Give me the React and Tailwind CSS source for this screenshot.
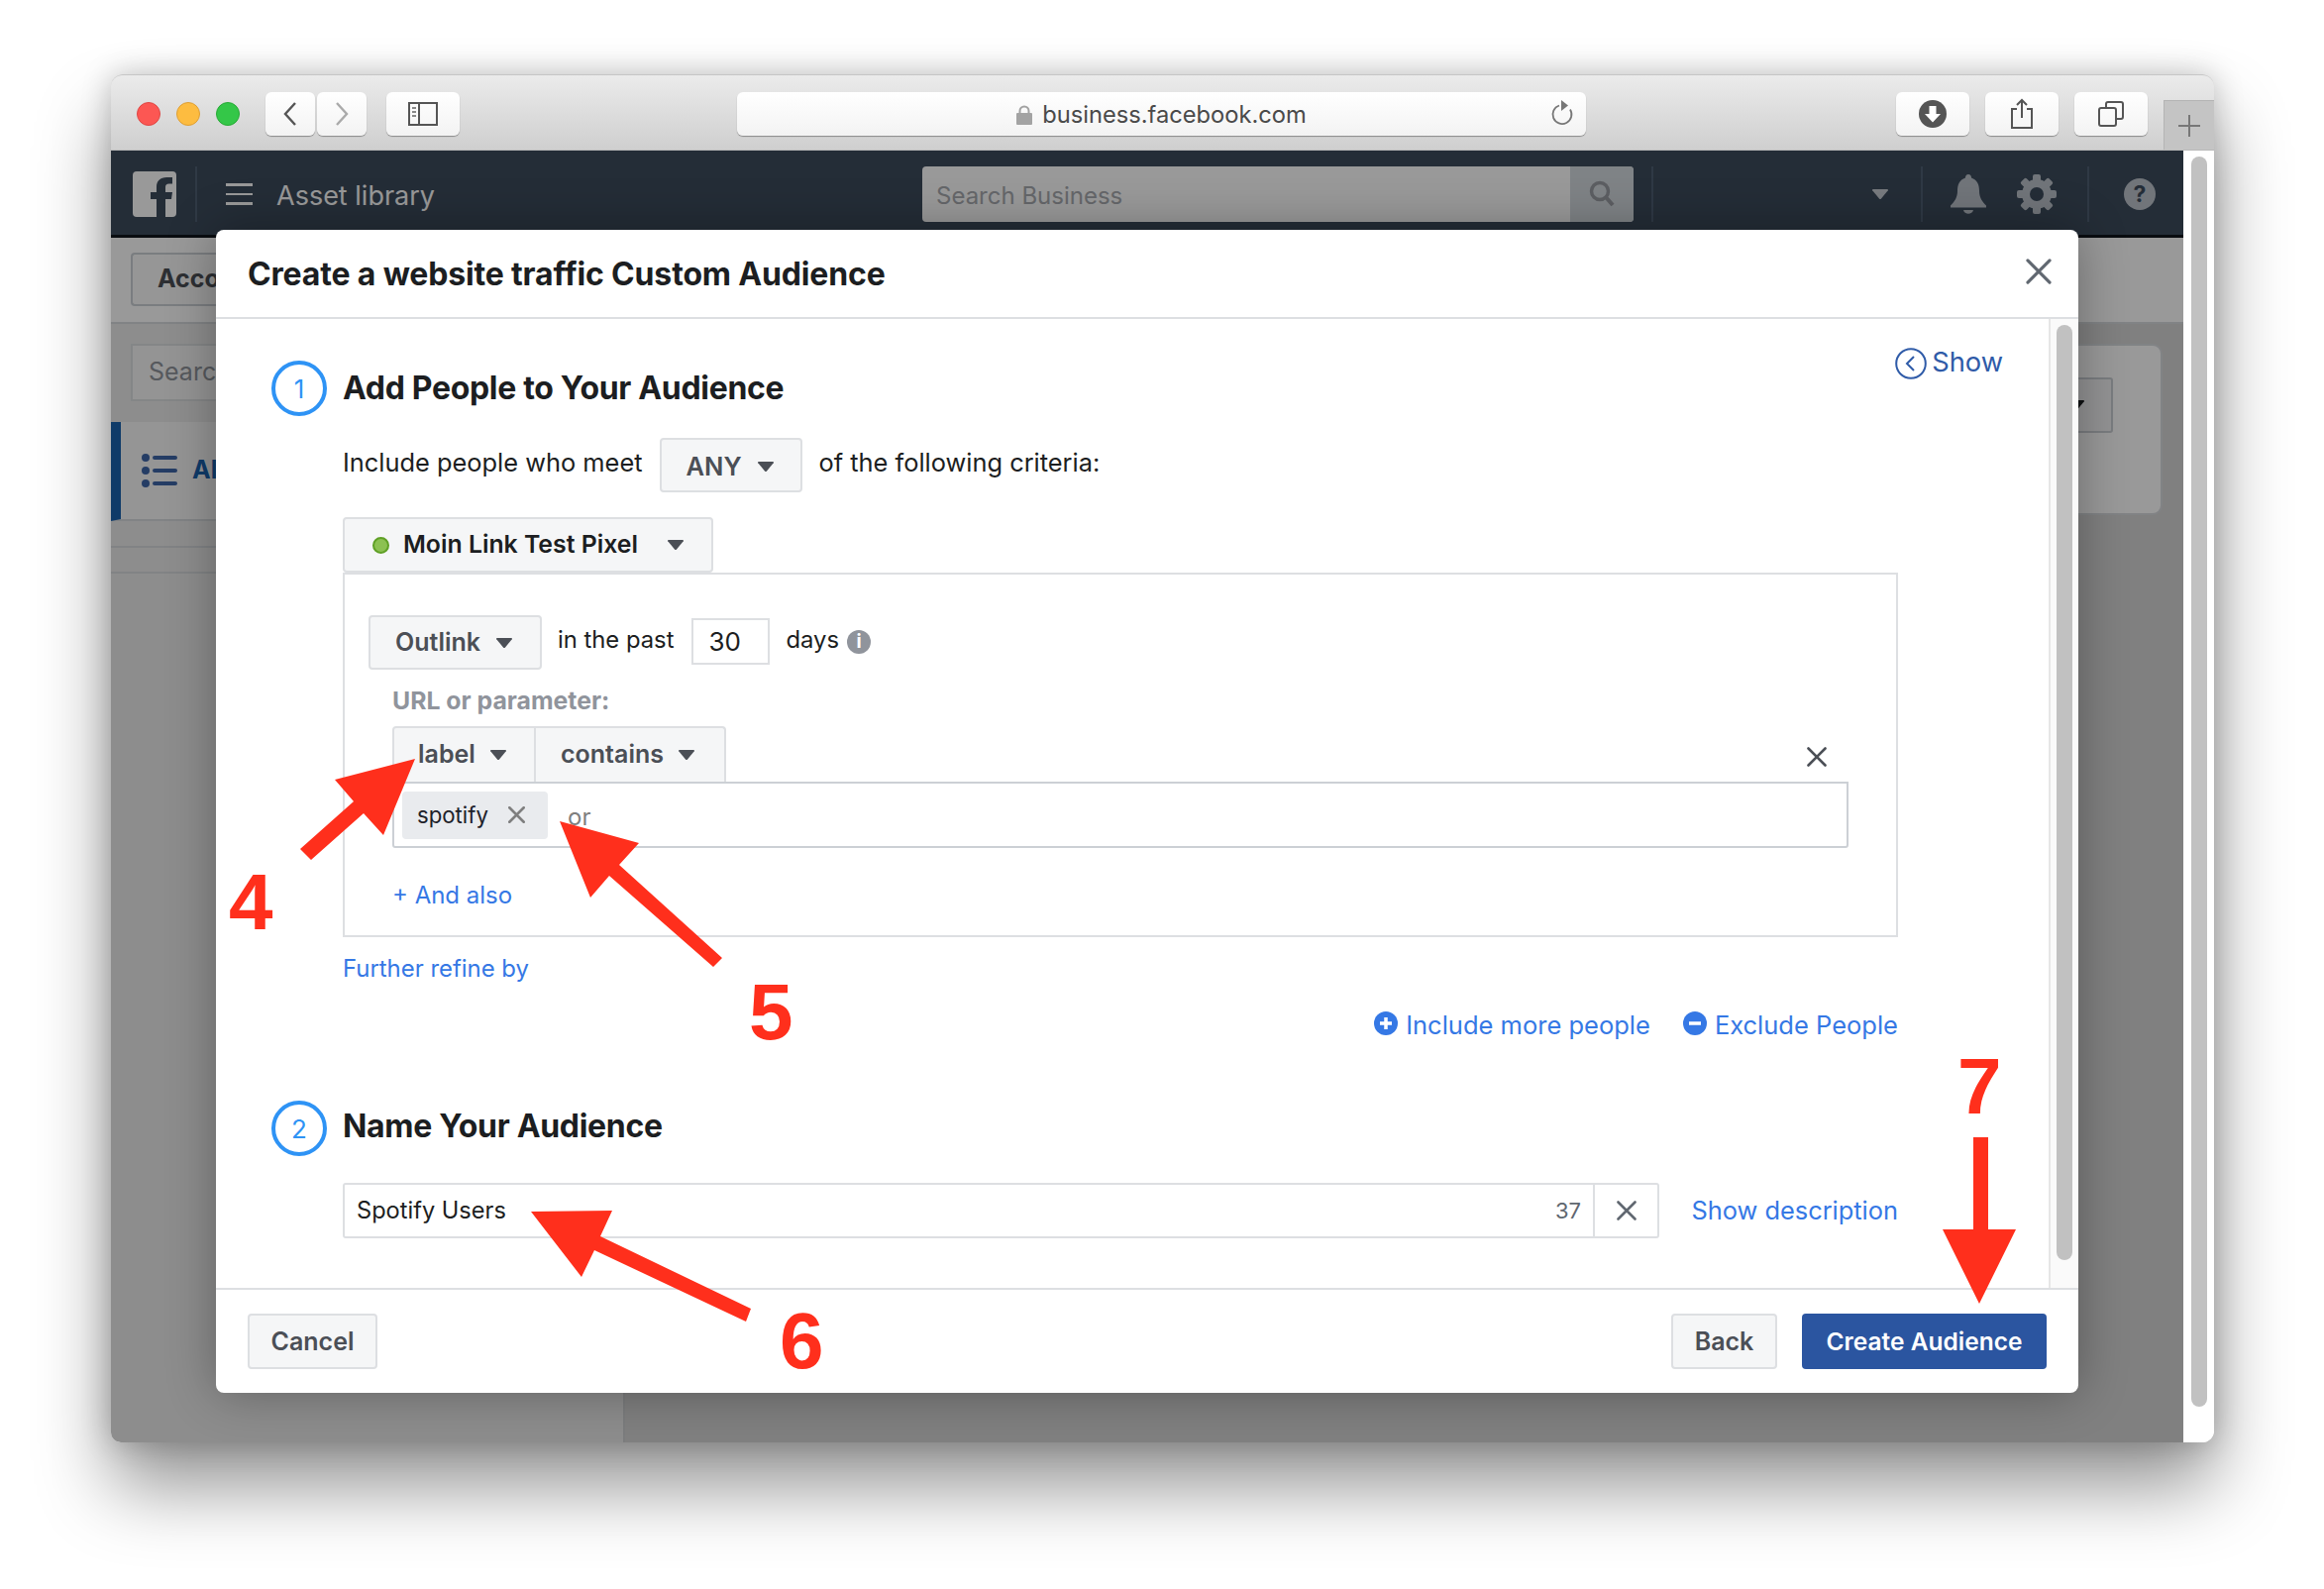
const Caret = ({ className = "" }) => (
  <svg width="18" height="12" viewBox="0 0 18 12" className={className}>
    <path d="M2 1h14q1.500 0 .8 1.300L10 10.500q-1 1-2 0L1.200 2.300Q.5 1 2 1z" fill="currentColor" />
  </svg>
);

const Cross = ({ size = 20, sw = 2.4, color = "#606770" }) => (
  <svg width={size} height={size} viewBox="0 0 20 20">
    <path d="M1.500 1.500l17 17M18.500 1.500l-17 17" stroke={color} strokeWidth={sw} fill="none" strokeLinecap="round" />
  </svg>
);

const Step = ({ n }) => (
  <div className="w-[56px] h-[56px] shrink-0 rounded-full border-[4px] border-[#2e93f5] flex items-center justify-center text-[#2e93f5] text-[26px]">{n}</div>
);

const GreyBtn = ({ children, className = "" }) => (
  <div className={`flex items-center rounded-[4px] border-2 border-[#dddfe2] bg-[#f5f6f7] text-[#4b4f56] font-semibold ${className}`}>{children}</div>
);

const SafariBtn = ({ children, className = "" }) => (
  <div className={`h-[44px] flex items-center justify-center rounded-[6px] bg-gradient-to-b from-white to-[#f3f3f3] shadow-[0_1px_1px_rgba(0,0,0,0.35)] ${className}`}>{children}</div>
);

const Num = ({ children, className = "" }) => (
  <span className={`absolute font-['Liberation_Sans',sans-serif] font-bold text-[80px] leading-[80px] text-[#ff2f1c] ${className}`}>{children}</span>
);

export default function App() {
  return (
    <div className="relative w-[2346px] h-[1604px] overflow-hidden bg-white font-['Inter',sans-serif] pl-[112px] pt-[75px]">
      <div className="w-[2123px] h-[1381px] flex flex-col rounded-[12px] shadow-[0_45px_75px_rgba(0,0,0,0.42),0_0_30px_rgba(0,0,0,0.22)]">
        {/* Safari toolbar */}
        <div className="h-[77px] shrink-0 relative flex items-start pt-[17px] pl-[26px] rounded-t-[12px] bg-gradient-to-b from-[#ebebeb] to-[#cfcfcf] border-t border-[#c6c6c6] border-b border-b-[#b9b9b9]">
          <div className="flex items-center gap-[16px] h-[44px]">
            <div className="w-[24px] h-[24px] rounded-full bg-[#fc5753] border border-[#df4744]" />
            <div className="w-[24px] h-[24px] rounded-full bg-[#fdbc40] border border-[#de9f34]" />
            <div className="w-[24px] h-[24px] rounded-full bg-[#34c748] border border-[#27aa35]" />
          </div>
          <div className="flex ml-[26px] gap-[2px]">
            <SafariBtn className="w-[50px]">
              <svg width="16" height="26" viewBox="0 0 16 26"><path d="M13 2L3 13l10 11" stroke="#555" strokeWidth="2.400" fill="none" /></svg>
            </SafariBtn>
            <SafariBtn className="w-[50px]">
              <svg width="16" height="26" viewBox="0 0 16 26"><path d="M3 2l10 11L3 24" stroke="#aaa" strokeWidth="2.400" fill="none" /></svg>
            </SafariBtn>
          </div>
          <SafariBtn className="w-[74px] ml-[20px]">
            <svg width="30" height="24" viewBox="0 0 30 24">
              <rect x="1" y="1" width="28" height="22" fill="none" stroke="#555" strokeWidth="2" />
              <path d="M11 1v22" stroke="#555" strokeWidth="2" />
              <path d="M4 6h4M4 10h4M4 14h4" stroke="#888" strokeWidth="2" />
            </svg>
          </SafariBtn>
          <SafariBtn className="w-[857px] ml-[280px] relative">
            <div className="flex items-center gap-[10px] text-[23.700px] text-[#4a4a4a] mt-[2px]">
              <svg width="16" height="20" viewBox="0 0 16 20"><path d="M3.500 9V6a4.500 4.500 0 0 1 9 0v3" stroke="#a3a3a3" strokeWidth="2" fill="none" /><rect y="8" width="16" height="12" rx="1" fill="#a3a3a3" /></svg>
              <span>business.facebook.com</span>
            </div>
            <svg width="24" height="26" viewBox="0 0 24 26" className="absolute right-[12px] top-[8px]">
              <path d="M9 5.500a9.500 9.500 0 1 0 11 4" stroke="#777" strokeWidth="1.800" fill="none" />
              <path d="M11 0l7 5.500-7 5.500z" fill="#777" />
            </svg>
          </SafariBtn>
          <div className="flex ml-[313px] gap-[16px]">
            <SafariBtn className="w-[74px]">
              <svg width="28" height="28" viewBox="0 0 28 28"><circle cx="14" cy="14" r="14" fill="#555" /><path d="M10.500 6h7v8h4.500L14 22.500 6 14h4.500z" fill="#fff" /></svg>
            </SafariBtn>
            <SafariBtn className="w-[74px]">
              <svg width="24" height="32" viewBox="0 0 24 32"><path d="M7 11H2v19h20V11h-5" stroke="#555" strokeWidth="2" fill="none" /><path d="M12 20V2M7 7l5-5 5 5" stroke="#555" strokeWidth="2" fill="none" /></svg>
            </SafariBtn>
            <SafariBtn className="w-[74px]">
              <svg width="26" height="26" viewBox="0 0 26 26"><rect x="1" y="7" width="17" height="18" rx="2" fill="none" stroke="#555" strokeWidth="2" /><path d="M8 7V3a2 2 0 0 1 2-2h13a2 2 0 0 1 2 2v13a2 2 0 0 1-2 2h-5" fill="none" stroke="#555" strokeWidth="2" /></svg>
            </SafariBtn>
          </div>
          <div className="absolute right-0 bottom-0 w-[51px] h-[50px] bg-[#c4c4c4] border-l border-t border-[#b4b4b4] flex items-center justify-center">
            <svg width="24" height="24" viewBox="0 0 24 24"><path d="M12 1v22M1 12h22" stroke="#777" strokeWidth="2" /></svg>
          </div>
        </div>

        {/* Page + window scrollbar */}
        <div className="flex-1 flex min-h-0">
          <div className="relative flex-1 min-w-0 flex flex-col overflow-hidden bg-[#e6e6e6] rounded-bl-[10px]">
            {/* Nav bar */}
            <div className="h-[88px] shrink-0 flex items-center pt-[3px] bg-[#3c4b5d] border-b-[3px] border-[#10151b] text-white">
              <div className="ml-[22px] w-[44px] h-[46px] rounded-[4px] bg-white relative overflow-hidden shrink-0">
                <svg width="46" height="46" viewBox="0 0 46 46" className="absolute inset-0">
                  <path d="M33 46V28h6l1-7h-7v-5c0-2 1-3.500 3.500-3.500H40V6h-5.500C27.500 6 24 10 24 15.500V21h-6v7h6v18z" fill="#3c4b5d" />
                </svg>
              </div>
              <div className="w-[2px] h-[56px] bg-[#4f5f73] ml-[19px]" />
              <div className="flex flex-col gap-[7px] ml-[29px]">
                <div className="w-[27px] h-[2.500px] bg-white" />
                <div className="w-[27px] h-[2.500px] bg-white" />
                <div className="w-[27px] h-[2.500px] bg-white" />
              </div>
              <span className="ml-[24px] mt-[3px] text-[27px] leading-none whitespace-nowrap">Asset library</span>
              <div className="ml-[492px] w-[718px] h-[56px] rounded-[4px] bg-white flex items-center overflow-hidden">
                <span className="pl-[14px] pt-[3px] flex-1 text-[24px] text-[#a9acb1]">Search Business</span>
                <div className="w-[64px] h-full bg-[#d4dadf] flex items-center justify-center">
                  <svg width="26" height="28" viewBox="0 0 26 28"><circle cx="11" cy="11" r="8.500" stroke="#9a9da3" strokeWidth="3.500" fill="none" /><path d="M17 17l7 8" stroke="#9a9da3" strokeWidth="4" /></svg>
                </div>
              </div>
              <div className="w-[2px] h-[56px] bg-[#4f5f73] ml-[18px]" />
              <Caret className="ml-[220px] text-[#c9ced4]" />
              <div className="w-[2px] h-[56px] bg-[#4f5f73] ml-[32px]" />
              <svg width="38" height="40" viewBox="0 0 38 40" className="ml-[27px]"><path d="M19 0c2 0 3 1.500 3 3.500 6 2 8 7 8 13 0 7 3 11 7 15v2H1v-2c4-4 7-8 7-15 0-6 2-11 8-13C16 1.500 17 0 19 0zM14 36h10c-1 5-9 5-10 0z" fill="#bcc3cb" /></svg>
              <svg width="40" height="40" viewBox="0 0 40 40" className="ml-[30px]">
                <g fill="#bcc3cb">
                  <circle cx="20" cy="20" r="15" />
                  <rect x="16" y="0" width="8" height="40" rx="2" />
                  <rect x="16" y="0" width="8" height="40" rx="2" transform="rotate(45 20 20)" />
                  <rect x="16" y="0" width="8" height="40" rx="2" transform="rotate(90 20 20)" />
                  <rect x="16" y="0" width="8" height="40" rx="2" transform="rotate(135 20 20)" />
                </g>
                <circle cx="20" cy="20" r="7" fill="#3c4b5d" />
              </svg>
              <div className="w-[2px] h-[56px] bg-[#4f5f73] ml-[31px]" />
              <div className="ml-[35px] w-[32px] h-[32px] rounded-full bg-[#bcc3cb] flex items-center justify-center text-[#3c4b5d] font-bold text-[23px]">?</div>
            </div>

            {/* Sub header */}
            <div className="h-[87px] shrink-0 bg-white border-b-2 border-[#d8dade] pl-[20px] pt-[15px]">
              <div className="w-[86px] h-[54px] overflow-hidden rounded-l-[4px] border-2 border-r-0 border-[#ccd0d5] bg-[#fafafa] flex items-center pl-[25px] text-[25px] font-bold text-[#4b4f56] whitespace-nowrap">Acco</div>
            </div>

            {/* Body */}
            <div className="flex-1 flex min-h-0 bg-[#d6d6d6]">
              <div className="w-[519px] shrink-0 bg-[#ececec] border-r-2 border-[#cfd0d2] flex flex-col">
                <div className="mt-[20px] ml-[20px] w-[86px] h-[58px] overflow-hidden border-2 border-r-0 border-[#dddfe2] bg-white/60 flex items-center pl-[16px] text-[25px] text-[#90949c]">Search</div>
                <div className="mt-[21px] h-[100px] bg-white/70 border-b-2 border-[#d8dade] border-l-[10px] border-l-[#1a63b0] flex items-center pl-[21px]">
                  <svg width="36" height="34" viewBox="0 0 36 34">
                    <g fill="#3f66a8"><circle cx="4" cy="4" r="4" /><circle cx="4" cy="17" r="4" /><circle cx="4" cy="30" r="4" /></g>
                    <path d="M13 4h21M13 17h21M13 30h21" stroke="#3f66a8" strokeWidth="4" strokeLinecap="round" />
                  </svg>
                  <span className="ml-[15px] w-[24px] overflow-hidden text-[25px] font-bold text-[#1a63b0]">All</span>
                </div>
                <div className="h-[27px] border-b-2 border-[#d8dade]" />
                <div className="h-[26px] border-b-2 border-[#d8dade]" />
              </div>
              <div className="flex-1 flex justify-end pt-[20px] pr-[21px]">
                <div className="w-[300px] h-[173px] rounded-[10px] border-2 border-[#d8dade] bg-white flex justify-end pt-[32px] pr-[48px]">
                  <div className="w-[120px] h-[56px] rounded-[3px] border-2 border-[#ccd0d5] bg-[#f5f6f7] flex items-center justify-end pr-[26px] text-[#1c1e21]">
                    <Caret />
                  </div>
                </div>
              </div>
            </div>

            {/* Dim overlay */}
            <div className="absolute inset-0 bg-black/40" />

            {/* Modal */}
            <div className="absolute left-[106px] top-[80px] w-[1880px] h-[1174px] flex flex-col rounded-[8px] bg-white shadow-[0_0_50px_rgba(0,0,0,0.32)]">
              <div className="h-[90px] shrink-0 border-b-2 border-[#dddfe2] flex items-center justify-between pl-[32px] pr-[27px] pt-[2px]">
                <span className="text-[32px] font-bold tracking-[-0.005em] text-[#1c1e21] leading-none">Create a website traffic Custom Audience</span>
                <div className="-mt-[6px]"><Cross size={26} sw={2.400} /></div>
              </div>

              <div className="flex-1 flex min-h-0">
                <div className="flex-1 min-w-0 pl-[56px] pt-[42px]">
                  {/* Section 1 head */}
                  <div className="flex items-start justify-between w-[1748px]">
                    <div className="flex items-center gap-[16px]">
                      <Step n="1" />
                      <span className="text-[32px] font-bold tracking-[-0.01em] text-[#1c1e21] leading-none">Add People to Your Audience</span>
                    </div>
                    <div className="flex items-center gap-[5px] -mt-[14px] text-[#2f5ba8] text-[27.300px] leading-[32px]">
                      <svg width="32" height="32" viewBox="0 0 32 32"><circle cx="16" cy="16" r="14.800" stroke="#2f5ba8" strokeWidth="2" fill="none" /><path d="M19 9l-7 7 7 7" stroke="#2f5ba8" strokeWidth="2" fill="none" /></svg>
                      <span className="mb-[2px]">Show</span>
                    </div>
                  </div>

                  <div className="ml-[72px] w-[1570px]">
                    <div className="mt-[22px] flex items-center text-[25.400px] text-[#1c1e21] leading-none">
                      <span className="mb-[6px]">Include people who meet</span>
                      <GreyBtn className="ml-[17px] w-[144px] h-[55px] pl-[25px] pt-[2px] text-[25.500px]">
                        <span>ANY</span>
                        <Caret className="ml-[15px]" />
                      </GreyBtn>
                      <span className="ml-[17px] mb-[6px]">of the following criteria:</span>
                    </div>

                    <GreyBtn className="mt-[25px] w-[374px] h-[56px] pl-[28px] text-[24.800px] !text-[#1c1e21]">
                      <div className="w-[17px] h-[17px] rounded-full bg-[#8cc152] border-2 border-[#5fa025]" />
                      <span className="ml-[14px]">Moin Link Test Pixel</span>
                      <Caret className="ml-[29px] text-[#4b4f56]" />
                    </GreyBtn>

                    <div className="border-2 border-[#dddfe2] h-[368px] pt-[41px] pl-[24px]">
                      <div className="flex items-center text-[23.800px] text-[#1c1e21] leading-none">
                        <GreyBtn className="w-[175px] h-[55px] pl-[25px] text-[25px]">
                          <span>Outlink</span>
                          <Caret className="ml-[15px]" />
                        </GreyBtn>
                        <span className="ml-[16px] mb-[5px]">in the past</span>
                        <div className="ml-[18px] w-[79px] h-[47px] border-2 border-[#dddfe2] flex items-center pl-[15px] text-[26px] -mt-[2px]">30</div>
                        <span className="ml-[16px] mb-[5px]">days</span>
                        <div className="ml-[8px] -mt-[2px] w-[24px] h-[24px] rounded-full bg-[#90949c] flex items-center justify-center text-white text-[19px] font-bold">i</div>
                      </div>

                      <div className="mt-[17px] ml-[24px] h-[30px] flex items-center text-[24.800px] font-bold text-[#90949c]">URL or parameter:</div>

                      <div className="mt-[10px] ml-[24px] w-[1470px]">
                        <div className="flex items-center justify-between h-[56px]">
                          <div className="flex h-full border-2 border-b-0 border-[#dddfe2] rounded-t-[4px] bg-[#f5f6f7] text-[25px] font-semibold text-[#4b4f56]">
                            <div className="w-[143px] flex items-center pl-[24px] border-r-2 border-[#dddfe2]">
                              <span>label</span>
                              <Caret className="ml-[14px]" />
                            </div>
                            <div className="w-[190px] flex items-center pl-[25px]">
                              <span>contains</span>
                              <Caret className="ml-[14px]" />
                            </div>
                          </div>
                          <div className="mr-[22px] mt-[6px]"><Cross size={20} sw={2.600} color="#4b4f56" /></div>
                        </div>
                        <div className="h-[67px] border-2 border-[#ccd0d5] rounded-b-[3px] flex items-center pl-[8px] text-[22.200px]">
                          <div className="w-[147px] h-[48px] rounded-[4px] bg-[#e9ebee] flex items-center pl-[15px] text-[#1d2129]">
                            <span>spotify</span>
                            <div className="ml-[20px]"><Cross size={17} sw={3} color="#7f7f7f" /></div>
                          </div>
                          <span className="ml-[20px] mt-[4px] text-[24px] text-[#7f7f7f]">or</span>
                        </div>
                      </div>

                      <div className="mt-[33px] ml-[24px] text-[24px] leading-[30px] text-[#3578e5]">+ And also</div>
                    </div>

                    <div className="mt-[17px] text-[23.900px] leading-[30px] text-[#3578e5]">Further refine by</div>

                    <div className="mt-[27px] flex justify-end items-center text-[25.500px] leading-[30px] text-[#3578e5]">
                      <svg width="24" height="24" viewBox="0 0 24 24" className="-mt-[5px]"><circle cx="12" cy="12" r="12" fill="#3578e5" /><path d="M12 6v12M6 12h12" stroke="#fff" strokeWidth="3.500" /></svg>
                      <span className="ml-[8px]">Include more people</span>
                      <svg width="24" height="24" viewBox="0 0 24 24" className="ml-[33px] -mt-[5px]"><circle cx="12" cy="12" r="12" fill="#3578e5" /><path d="M6 12h12" stroke="#fff" strokeWidth="3.500" /></svg>
                      <span className="ml-[8px]">Exclude People</span>
                    </div>
                  </div>

                  {/* Section 2 */}
                  <div className="mt-[61px] flex items-center gap-[16px]">
                    <Step n="2" />
                    <span className="mb-[5px] text-[32px] font-bold tracking-[-0.01em] text-[#1c1e21] leading-none">Name Your Audience</span>
                  </div>

                  <div className="mt-[27px] ml-[72px] w-[1570px] flex items-center justify-between">
                    <div className="w-[1329px] h-[56px] flex items-center border-2 border-[#dddfe2] rounded-[3px] text-[23.600px] text-[#1c1e21]">
                      <span className="pl-[12px] flex-1">Spotify Users</span>
                      <span className="pr-[12px] text-[22px] text-[#606770]">37</span>
                      <div className="w-[65px] h-full border-l-2 border-[#dddfe2] flex items-center justify-center"><Cross size={20} sw={2.600} /></div>
                    </div>
                    <span className="text-[25.400px] text-[#3578e5]">Show description</span>
                  </div>
                </div>

                <div className="w-[30px] shrink-0 bg-[#fafafa] border-l-2 border-[#e6e6e6] pl-[6px] pt-[6px]">
                  <div className="w-[16px] h-[944px] rounded-full bg-[#c1c1c1]" />
                </div>
              </div>

              <div className="h-[106px] shrink-0 border-t-2 border-[#dddfe2] flex items-start pt-[24px] pl-[32px] pr-[32px]">
                <GreyBtn className="w-[131px] h-[56px] justify-center pt-[1px] text-[25px]">Cancel</GreyBtn>
                <GreyBtn className="ml-auto w-[107px] h-[56px] justify-center pt-[1px] text-[25px]">Back</GreyBtn>
                <div className="ml-[25px] w-[247px] h-[56px] rounded-[4px] bg-[#2b55a0] flex items-center justify-center text-[24.500px] font-semibold text-white">Create Audience</div>
              </div>
            </div>
          </div>

          {/* Window scrollbar */}
          <div className="w-[31px] shrink-0 bg-white pl-[8px] pt-[6px] rounded-br-[12px]">
            <div className="w-[16px] h-[1262px] rounded-full bg-[#c1c1c1]" />
          </div>
        </div>
      </div>

      {/* Annotations */}
      <svg width="2346" height="1604" viewBox="0 0 2346 1604" className="absolute left-0 top-0 pointer-events-none">
        <g fill="#ff2f1c">
          <polygon points="419,766 338,787 357,809 303,857 314,868 367,821 387,843" />
          <polygon points="565,829 645,851 625,873 729,967 720,976 615,884 596,906" />
          <polygon points="536,1223 618,1222 606,1248 758,1321 753,1334 600,1262 587,1289" />
          <polygon points="1992,1148 2007,1148 2007,1241 2035,1241 1998,1316 1961,1241 1992,1241" />
        </g>
      </svg>
      <Num className="left-[231px] top-[871px]">4</Num>
      <Num className="left-[756px] top-[982px]">5</Num>
      <Num className="left-[787px] top-[1314px]">6</Num>
      <Num className="left-[1976px] top-[1057px]">7</Num>
    </div>
  );
}
